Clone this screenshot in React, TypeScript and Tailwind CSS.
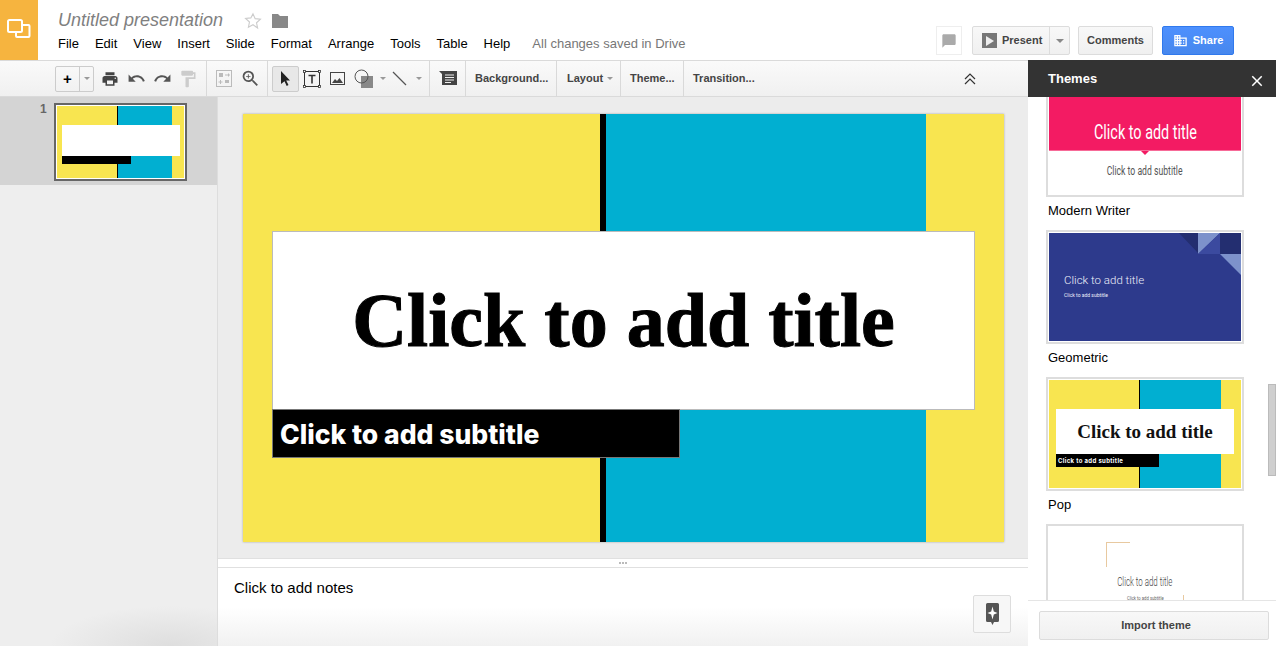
import { MdPrint, MdUndo, MdRedo, MdFormatPaint, MdZoomIn, MdChatBubble, MdBusiness, MdClose } from 'react-icons/md';

const menus = ['File', 'Edit', 'View', 'Insert', 'Slide', 'Format', 'Arrange', 'Tools', 'Table', 'Help'];

function Caret({ className = '' }: { className?: string }) {
  return <span className={`h-0 w-0 border-x-[3px] border-t-[3px] border-x-transparent border-t-[#999] ${className}`} />;
}

function Sep({ className = '' }: { className?: string }) {
  return <div className={`h-[37px] w-px shrink-0 bg-[#d9d9d9] ${className}`} />;
}

function TextTool({ label, box, caret }: { label: string; box: string; caret?: boolean }) {
  return (
    <div className={`flex h-full shrink-0 items-center gap-[4px] text-[11px] font-bold text-[#444] ${box}`}>
      {label}
      {caret && <Caret />}
    </div>
  );
}

function Header() {
  return (
    <header className="flex h-[60px] shrink-0 bg-white">
      <div className="flex w-[38px] items-center justify-center bg-[#f6b43f]">
        <svg width="24" height="22" viewBox="0 0 24 22" fill="none" stroke="white" strokeWidth="2">
          <rect x="1" y="1" width="14" height="12" rx="1.5" />
          <path d="M16 6h5.5a1 1 0 0 1 1 1v10a1 1 0 0 1-1 1H10a1 1 0 0 1-1-1v-3" />
        </svg>
      </div>
      <div className="ml-5 flex flex-col">
        <div className="mt-[9px] flex h-[23px] items-center">
          <span className="text-[18px] italic text-[#808080]">Untitled presentation</span>
          <svg className="ml-[21px]" width="18" height="18" viewBox="0 0 24 24" fill="none" stroke="#ccc" strokeWidth="1.5">
            <path d="M12 2.5l2.9 6.4 7 .8-5.2 4.7 1.4 6.9L12 17l-6.1 3.3 1.4-6.9L2.100 8.700l7-.8z" />
          </svg>
          <svg className="ml-[10px]" width="16" height="14" viewBox="0 0 16 14" fill="#888">
            <path d="M0 0h6l2 2h8v12H0z" />
          </svg>
        </div>
        <nav className="mt-[4px] flex items-center gap-4 text-[13px] leading-[16px] text-black">
          {menus.map((m) => (
            <span key={m}>{m}</span>
          ))}
          <span className="ml-[6px] text-[#777]">All changes saved in Drive</span>
        </nav>
      </div>
      <div className="ml-auto mr-[42px] mt-[26px] flex h-[29px] items-center text-[11px] font-bold">
        <div className="flex h-[29px] w-[26px] items-center justify-center border border-[#eee]">
          <MdChatBubble size={16} color="#aaa" />
        </div>
        <div className="ml-[10px] flex h-[29px] w-[98px] rounded-[2px] border border-[#dcdcdc] bg-gradient-to-b from-[#f8f8f8] to-[#f0f0f0] text-[#444]">
          <div className="flex w-[77px] items-center gap-[5px] border-r border-[#dcdcdc] pl-[9px]">
            <span className="flex h-[15px] w-[15px] items-center justify-center bg-[#777]">
              <span className="ml-px h-0 w-0 border-y-[5px] border-l-[8px] border-y-transparent border-l-[#eee]" />
            </span>
            Present
          </div>
          <div className="flex flex-1 items-center justify-center">
            <span className="h-0 w-0 border-x-[4px] border-t-[4px] border-x-transparent border-t-[#888]" />
          </div>
        </div>
        <div className="ml-2 flex h-[29px] w-[75px] items-center justify-center rounded-[2px] border border-[#dcdcdc] bg-gradient-to-b from-[#f8f8f8] to-[#f0f0f0] text-[#444]">
          Comments
        </div>
        <div className="ml-[9px] flex h-[29px] w-[72px] items-center justify-center gap-[5px] rounded-[2px] border border-[#3079ed] bg-gradient-to-b from-[#4d90fe] to-[#4787ed] text-white">
          <MdBusiness size={15} />
          Share
        </div>
      </div>
    </header>
  );
}

function Toolbar() {
  return (
    <div className="flex h-[37px] flex-1 items-center border-y border-[#dadada] bg-gradient-to-b from-[#fafafa] to-[#f0f0f0] pl-[55px] text-[#555]">
      <div className="flex h-[26px] w-[39px] shrink-0 rounded-[2px] border border-[#ccc]">
        <div className="flex w-[24px] items-center justify-center border-r border-[#ccc] text-[15px] font-bold leading-none text-black">+</div>
        <div className="flex flex-1 items-center justify-center"><Caret /></div>
      </div>
      <div className="ml-[3px] flex w-[26px] shrink-0 justify-center"><MdPrint size={18} color="#444" /></div>
      <div className="flex w-[26px] shrink-0 justify-center"><MdUndo size={19} color="#555" /></div>
      <div className="flex w-[26px] shrink-0 justify-center"><MdRedo size={19} color="#555" /></div>
      <div className="flex w-[26px] shrink-0 justify-center"><MdFormatPaint size={20} color="#ccc" /></div>
      <Sep className="ml-[5px]" />
      <div className="ml-[4px] flex w-[26px] shrink-0 justify-center">
        <svg width="16" height="17" viewBox="0 0 16 17" fill="#bbb">
          <path d="M0 0h16v17H0zM1 1v15h14V1z" fillRule="evenodd" />
          <path d="M3 3h4v4H3zM4 10h1v1.500h1.500v1H5V14H4v-1.500H2.500v-1H4zM9 4.500h3v-1.500l2 2-2 2V5.500H9zM9 10h4v3H9z" />
        </svg>
      </div>
      <div className="flex w-[26px] shrink-0 justify-center"><MdZoomIn size={21} color="#555" /></div>
      <Sep className="ml-[4px]" />
      <div className="ml-[4px] flex h-[26px] w-[27px] shrink-0 items-center justify-center rounded-[2px] border border-[#ccc] bg-[#e8e8e8]">
        <svg width="11" height="15" viewBox="0 0 11 15" fill="#222"><path d="M1 0l9 9.500H6.200l2.300 4.500-1.800.9-2.200-4.600L1 13z" /></svg>
      </div>
      <div className="flex w-[25px] shrink-0 justify-center">
        <svg width="18" height="18" viewBox="0 0 18 18" fill="none" stroke="#333">
          <rect x="1.500" y="1.500" width="15" height="15" />
          <path d="M5.500 5.500h7M9 5.500v8" strokeWidth="1.600" />
          <g fill="white" strokeWidth="0.800">
            <rect x="0.500" y="0.500" width="2" height="2" />
            <rect x="15.500" y="0.500" width="2" height="2" />
            <rect x="0.500" y="15.500" width="2" height="2" />
            <rect x="15.500" y="15.500" width="2" height="2" />
          </g>
        </svg>
      </div>
      <div className="flex w-[27px] shrink-0 justify-center">
        <svg width="15" height="13" viewBox="0 0 15 13" fill="none" stroke="#444">
          <rect x="0.500" y="0.500" width="14" height="12" />
          <path d="M2 11l3-4 2 2 2.500-3L13 11z" fill="#444" stroke="none" />
        </svg>
      </div>
      <div className="flex w-[38px] shrink-0 items-center pl-[3px]">
        <svg width="24" height="19" viewBox="0 0 24 19">
          <rect x="7" y="7" width="12" height="12" fill="#888" />
          <circle cx="7.500" cy="7.500" r="6.500" fill="none" stroke="#555" />
        </svg>
        <Caret className="ml-[2px]" />
      </div>
      <div className="flex w-[35px] shrink-0 items-center pl-[3px]">
        <svg width="15" height="15" viewBox="0 0 15 15" stroke="#555" strokeWidth="1.200"><path d="M1 1l13 13" /></svg>
        <Caret className="ml-[9px]" />
      </div>
      <Sep className="ml-[5px]" />
      <div className="flex w-[35px] shrink-0 justify-center">
        <svg width="18" height="15" viewBox="0 0 18 15" fill="#444">
          <path d="M0 0h2l16 0v14H3V3z" />
          <path d="M6 4h9M6 6.500h9M6 9h9M6 11.500h6" stroke="#eee" />
        </svg>
      </div>
      <Sep />
      <TextTool label="Background..." box="w-[90px] pl-[9px]" />
      <Sep />
      <TextTool label="Layout" box="w-[63px] pl-[10px]" caret />
      <Sep />
      <TextTool label="Theme..." box="w-[62px] pl-[9px]" />
      <Sep />
      <TextTool label="Transition..." box="w-[90px] pl-[9px]" />
      <div className="ml-auto mr-[52px] flex shrink-0 justify-center">
        <svg width="12" height="12" viewBox="0 0 12 12" fill="none" stroke="#333" strokeWidth="1.200">
          <path d="M1 6l5-5 5 5M1 11l5-5 5 5" />
        </svg>
      </div>
    </div>
  );
}

function Filmstrip() {
  return (
    <aside className="w-[218px] shrink-0 border-r border-[#ddd] bg-[#eeeeee] bg-[radial-gradient(ellipse_120px_40px_at_170px_100%,#dedede,#eeeeee)]">
      <div className="flex h-[88px] bg-[#d4d4d4] pl-[40px] pt-[6px]">
        <span className="w-[14px] text-[12px] font-bold leading-[12px] text-[#666]">1</span>
        <div className="h-[78px] w-[133px] border-[2px] border-[#666] bg-white p-px">
          <div className="relative flex h-[72px] w-[127px] bg-[#f8e550]">
            <div className="w-[60px]" />
            <div className="w-px bg-black" />
            <div className="w-[54px] bg-[#01afd1]" />
            <div className="absolute left-[5px] top-[19px] h-[31px] w-[118px] bg-white" />
            <div className="absolute left-[5px] top-[50px] h-[8px] w-[69px] bg-black" />
          </div>
        </div>
      </div>
    </aside>
  );
}

function Canvas() {
  return (
    <div className="flex-1 pl-[25px] pt-[17px]">
      <div className="relative flex h-[428px] w-[761px] bg-[#f8e550] shadow-[0_0_2px_rgba(0,0,0,0.3)]">
        <div className="w-[357px]" />
        <div className="w-[6px] bg-black" />
        <div className="w-[320px] bg-[#01afd1]" />
        <div className="absolute left-[29px] top-[117px] flex h-[179px] w-[703px] items-center justify-center border border-[#bbb] bg-white pb-[2px] font-['Liberation_Serif',serif] text-[76px] font-bold text-black [-webkit-text-stroke:1px_black]">
          Click to add title
        </div>
        <div className="absolute left-[29px] top-[295px] flex h-[49px] w-[408px] items-center border border-[#777] bg-black pl-[7px] pt-[2px] font-['Inter',sans-serif] text-[26.5px] font-extrabold text-white">
          Click to add subtitle
        </div>
      </div>
    </div>
  );
}

function Notes() {
  return (
    <div className="relative h-[88px] shrink-0 border-t border-[#e0e0e0] bg-gradient-to-b from-white from-[55%] to-[#f1f1f1]">
      <div className="flex h-[9px] items-center justify-center gap-px border-b border-[#e0e0e0] bg-white">
        <span className="h-[2px] w-[2px] bg-[#bbb]" />
        <span className="h-[2px] w-[2px] bg-[#bbb]" />
        <span className="h-[2px] w-[2px] bg-[#bbb]" />
      </div>
      <p className="pl-4 pt-[11px] text-[15px] leading-[17px] text-black">Click to add notes</p>
      <div className="absolute right-[17px] top-[36px] flex h-[38px] w-[38px] items-center justify-center rounded-[2px] border border-[#ddd] bg-[#f7f7f7]">
        <svg width="13" height="22" viewBox="0 0 13 22">
          <path d="M1.500 0h10a1.500 1.500 0 0 1 1.500 1.500v16a1.500 1.500 0 0 1-1.500 1.500H8l-1.500 3L5 19H1.500A1.500 1.500 0 0 1 0 17.500v-16A1.500 1.500 0 0 1 1.500 0z" fill="#555" />
          <path d="M6.500 3.500l1.300 5 3.700 1.500-3.700 1.500-1.300 5-1.300-5L1.500 10l3.700-1.500z" fill="white" />
        </svg>
      </div>
    </div>
  );
}

function ThemeCard({ children, label }: { children: React.ReactNode; label: string }) {
  return (
    <div className="h-[147px]">
      <div className="h-[114px] w-[198px] border-2 border-[#ddd] bg-white p-px">{children}</div>
      <p className="pl-[2px] pt-[6px] text-[13px] leading-[16px] text-black">{label}</p>
    </div>
  );
}

function ThemesPanel() {
  return (
    <aside className="relative flex w-[248px] shrink-0 flex-col bg-white">
      <div className="min-h-0 flex-1 overflow-hidden pl-[18px]">
        <div className="-mt-[14px]">
          <ThemeCard label="Modern Writer">
            <div className="relative h-[65px] border-b border-[#f76b98] bg-[#f31b63] pt-[34px] text-center leading-[24px]">
              <span className="inline-block origin-center scale-x-[0.72] font-['Roboto',sans-serif] text-[20px] leading-[24px] text-white">Click to add title</span>
              <span className="absolute bottom-[-5px] left-[92px] h-0 w-0 border-x-[4px] border-t-[4px] border-x-transparent border-t-[#f31b63]" />
            </div>
            <p className="mt-[12px] text-center leading-[14px]"><span className="inline-block scale-x-[0.72] font-['Roboto',sans-serif] text-[12px] leading-[14px] text-[#555]">Click to add subtitle</span></p>
          </ThemeCard>
          <ThemeCard label="Geometric">
            <div className="relative h-[108px] bg-[#2d3a8c] pl-[15px] pt-[40px] font-['Roboto',sans-serif] text-[#eef0fa]">
              <svg className="absolute right-0 top-0" width="62" height="42" viewBox="0 0 62 42">
                <path d="M0 0h20v21z" fill="#232e70" />
                <path d="M19 0h22L19 21z" fill="#7d92cb" />
                <path d="M41 0v21H19z" fill="#3b4a9f" />
                <path d="M41 0h21v21H41z" fill="#232e70" />
                <path d="M41 21h21v21z" fill="#7d92cb" />
              </svg>
              <p className="text-[11.500px] font-light leading-[14px]">Click to add title</p>
              <p className="mt-[5px] text-[5px] leading-[7px]">Click to add subtitle</p>
            </div>
          </ThemeCard>
          <ThemeCard label="Pop">
            <div className="relative flex h-[108px] bg-[#f8e550]">
              <div className="w-[90px]" />
              <div className="w-px bg-black" />
              <div className="w-[81px] bg-[#01afd1]" />
              <div className="absolute left-[7px] top-[29px] flex h-[45px] w-[178px] items-center justify-center bg-white pt-[2px] font-['Liberation_Serif',serif] text-[19px] font-bold text-[#111]">
                Click to add title
              </div>
              <div className="absolute left-[7px] top-[74px] flex h-[13px] w-[103px] items-center bg-black pl-[2px] font-['Inter',sans-serif] text-[6px] font-bold tracking-[0.35px] text-white">
                Click to add subtitle
              </div>
            </div>
          </ThemeCard>
          <div className="relative h-[114px] w-[198px] border-2 border-[#ddd] bg-white">
            <div className="absolute left-[58px] top-[16px] h-[25px] w-[24px] border-l border-t border-[#e8c9a0]" />
            <p className="absolute inset-x-0 top-[48px] text-center leading-[14px]"><span className="inline-block scale-x-[0.66] font-['Roboto',sans-serif] text-[12px] font-light leading-[14px] text-[#444]">Click to add title</span></p>
            <p className="absolute inset-x-0 top-[65px] text-center leading-[8px]"><span className="inline-block scale-x-[0.7] font-['Roboto',sans-serif] text-[6px] leading-[8px] text-[#666]">Click to add subtitle</span></p>
            <div className="absolute left-[135px] top-[69px] h-[5px] w-px bg-[#e8c9a0]" />
          </div>
        </div>
      </div>
      <div className="absolute right-0 top-[287px] h-[92px] w-2 border border-[#bbb] bg-[#cfcfcf]" />
      <div className="h-[46px] shrink-0 border-t border-[#e5e5e5] bg-white pl-[11px] pt-[10px]">
        <div className="flex h-[29px] w-[230px] items-center justify-center rounded-[2px] border border-[#dcdcdc] bg-gradient-to-b from-[#f8f8f8] to-[#f0f0f0] pl-[4px] text-[11px] font-bold text-[#444]">
          Import theme
        </div>
      </div>
    </aside>
  );
}

export default function App() {
  return (
    <div className="flex h-[646px] w-[1276px] flex-col overflow-hidden bg-white font-['Liberation_Sans',Arial,sans-serif]">
      <Header />
      <div className="flex h-[37px] shrink-0">
        <Toolbar />
        <div className="relative flex w-[248px] shrink-0 items-center bg-[#333] pl-5 text-[13px] font-bold text-white">
          Themes
          <MdClose className="absolute right-[10px] top-[12px]" size={18} />
        </div>
      </div>
      <div className="flex min-h-0 flex-1">
        <Filmstrip />
        <main className="flex min-w-0 flex-1 flex-col bg-[#ececec]">
          <Canvas />
          <Notes />
        </main>
        <ThemesPanel />
      </div>
    </div>
  );
}
